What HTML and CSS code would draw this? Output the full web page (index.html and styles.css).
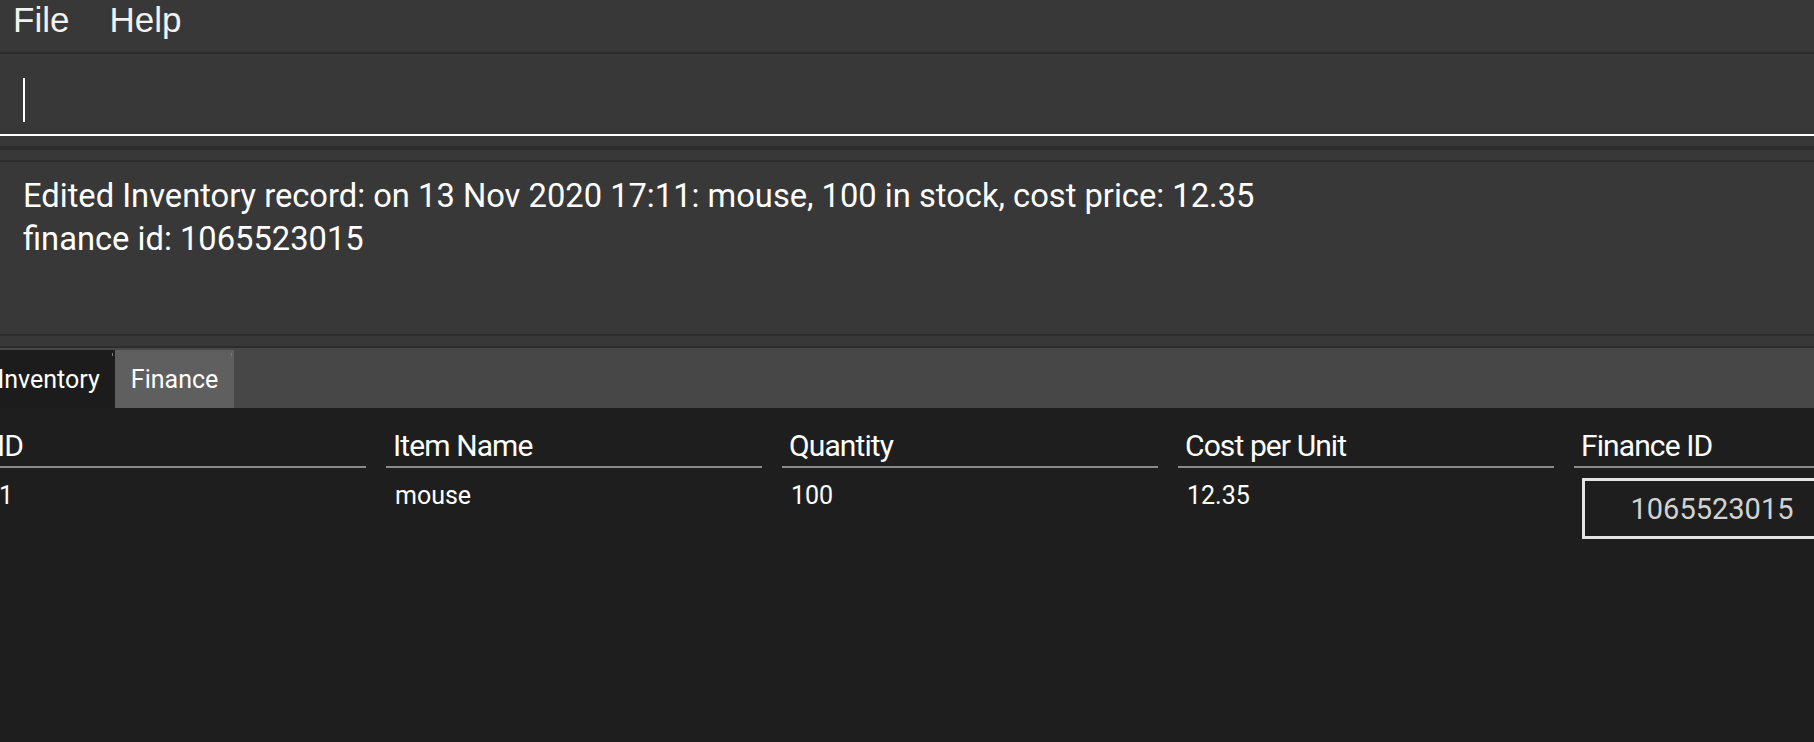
FILE: index.html
```html
<!DOCTYPE html>
<html>
<head>
<meta charset="utf-8">
<link rel="stylesheet" href="styles.css">
</head>
<body>
<div class="app">
  <div class="menubar">
    <span class="menu-item">File</span>
    <span class="menu-item">Help</span>
  </div>
  <div class="command">
    <span class="caret"></span>
  </div>
  <div class="gap gap-a"></div>
  <div class="gap gap-b"></div>
  <div class="result">
    <div class="result-line">Edited Inventory record: on 13 Nov 2020 17:11: mouse, 100 in stock, cost price: 12.35</div>
    <div class="result-line">finance id: 1065523015</div>
  </div>
  <div class="gap gap-c"></div>
  <div class="tabbar">
    <div class="tab tab-active">Inventory</div>
    <div class="tab tab-idle">Finance</div>
  </div>
  <div class="table">
    <div class="table-grid">
      <div class="th">ID</div>
      <div class="th">Item Name</div>
      <div class="th">Quantity</div>
      <div class="th">Cost per Unit</div>
      <div class="th">Finance ID</div>
      <div class="td">1</div>
      <div class="td">mouse</div>
      <div class="td">100</div>
      <div class="td">12.35</div>
      <div class="td td-box"><div class="id-box">1065523015</div></div>
    </div>
  </div>
</div>
</body>
</html>
```

FILE: styles.css
```css
html, body {
  margin: 0;
  padding: 0;
  width: 1814px;
  height: 742px;
  overflow: hidden;
  background: #1e1e1e;
}

.app {
  width: 1814px;
  height: 742px;
  display: flex;
  flex-direction: column;
  font-family: Roboto, "Liberation Sans", sans-serif;
  color: #ffffff;
}

.menubar {
  height: 52px;
  flex: none;
  background: #383838;
  border-bottom: 2px solid #2b2b2b;
  display: flex;
  align-items: flex-start;
  gap: 40px;
  padding-left: 13px;
  font-family: "Liberation Sans", Arial, sans-serif;
  font-size: 35px;
  line-height: 40px;
  color: #f2f2f2;
}

.command {
  height: 80px;
  flex: none;
  background: #383838;
  border-bottom: 2px solid #ffffff;
  padding-left: 23px;
  display: flex;
  align-items: flex-start;
}

.caret {
  display: block;
  width: 2px;
  height: 44px;
  margin-top: 24px;
  background: #ffffff;
}

.gap {
  flex: none;
  background: #383838;
}

.gap-a {
  height: 10px;
  border-bottom: 4px solid #2c2c2c;
}

.gap-b {
  height: 10px;
  border-bottom: 2px solid #2c2c2c;
}

.gap-c {
  height: 10px;
  border-bottom: 2px solid #2c2c2c;
}

.result {
  height: 159px;
  flex: none;
  background: #383838;
  border-bottom: 2px solid #2c2c2c;
  padding: 13px 0 0 23px;
  font-size: 32.7px;
  line-height: 43px;
}

.tabbar {
  height: 58px;
  flex: none;
  padding-top: 2px;
  background: #474747;
  display: flex;
  margin-left: -18px;
  font-size: 25px;
}

.tab {
  height: 56px;
  padding: 2px 15.5px 0;
  line-height: 56px;
  position: relative;
}

.tab::after {
  content: "";
  position: absolute;
  top: 3px;
  right: 2px;
  width: 1px;
  height: 3px;
  background: #7a7a7a;
}

.tab-active {
  background: #1c1c1c;
}

.tab-idle {
  background: #5f5f5f;
}

.table {
  flex: 1;
  background: #1e1e1e;
  overflow: hidden;
}

.table-grid {
  display: grid;
  grid-template-columns: repeat(5, 376px);
  column-gap: 20px;
  margin-left: -10px;
  width: 1960px;
}

.th {
  margin-top: 20px;
  height: 36px;
  padding: 0 0 2px 7px;
  border-bottom: 2px solid #8a8a8a;
  font-size: 30px;
  line-height: 36px;
  letter-spacing: -0.9px;
  white-space: nowrap;
}

.td {
  padding: 13px 0 0 9px;
  font-size: 25px;
  line-height: 30px;
  white-space: nowrap;
}

.td-box {
  padding: 10px 0 0 8px;
}

.id-box {
  width: 254px;
  height: 55px;
  border: 3px solid #e4e4e4;
  display: flex;
  align-items: center;
  justify-content: center;
  font-size: 29px;
  color: #d2d2d2;
}
```
